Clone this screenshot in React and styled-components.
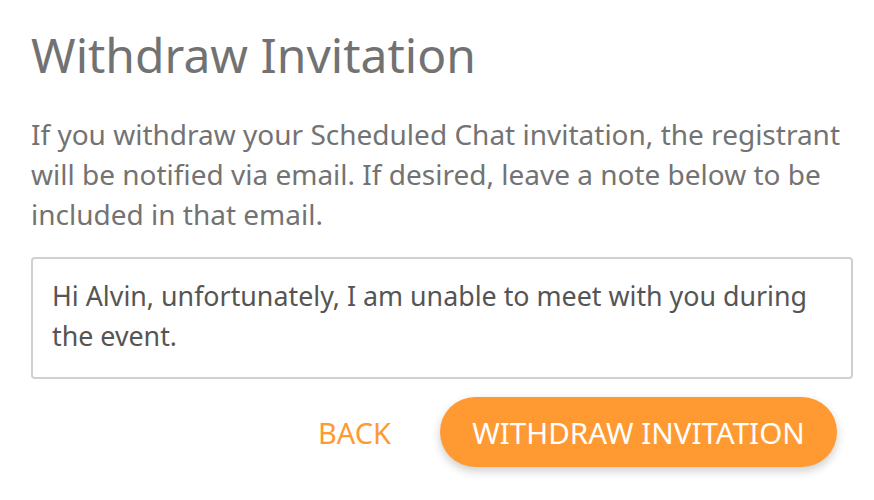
import styled, { createGlobalStyle } from "styled-components";

const GlobalStyle = createGlobalStyle`
  body {
    margin: 0;
    background: #fff;
    font-family: "Noto Sans", "Open Sans", sans-serif;
  }
`;

const Dialog = styled.div`
  width: 874px;
  height: 500px;
  box-sizing: border-box;
  padding: 20px 21px 0 31px;
`;

const Title = styled.h1`
  margin: 0;
  font-size: 48px;
  font-weight: 400;
  line-height: 70px;
  color: #727272;
`;

const Message = styled.p`
  margin: 24px 0 0;
  font-size: 28px;
  line-height: 40px;
  color: #737373;
`;

const Note = styled.textarea`
  display: block;
  box-sizing: border-box;
  width: 822px;
  height: 122px;
  margin-top: 23px;
  padding: 17px 18px 0 19px;
  border: 2px solid #d0d0d0;
  border-radius: 4px;
  font-family: inherit;
  font-size: 26.8px;
  line-height: 40px;
  color: #555;
  resize: none;
  outline: none;
`;

const Actions = styled.div`
  display: flex;
  justify-content: flex-end;
  align-items: center;
  gap: 49px;
  margin-top: 18px;
  padding-right: 16px;
`;

const TextButton = styled.button`
  border: 0;
  background: none;
  padding: 0;
  font-family: inherit;
  font-size: 29px;
  color: #ff9a33;
  text-transform: uppercase;
  cursor: pointer;
`;

const PillButton = styled.button`
  border: 0;
  height: 70px;
  width: 397px;
  border-radius: 35px;
  background: #ff9a33;
  color: #fff;
  font-family: inherit;
  font-size: 29.6px;
  text-transform: uppercase;
  box-shadow: 0 4px 10px rgba(0, 0, 0, 0.2);
  cursor: pointer;
`;

export default function App() {
  return (
    <>
      <GlobalStyle />
      <Dialog>
        <Title>Withdraw Invitation</Title>
        <Message>
          If you withdraw your Scheduled Chat invitation, the registrant will be
          notified via email. If desired, leave a note below to be included in
          that email.
        </Message>
        <Note
          defaultValue="Hi Alvin, unfortunately, I am unable to meet with you during the event."
        />
        <Actions>
          <TextButton>Back</TextButton>
          <PillButton>Withdraw Invitation</PillButton>
        </Actions>
      </Dialog>
    </>
  );
}
